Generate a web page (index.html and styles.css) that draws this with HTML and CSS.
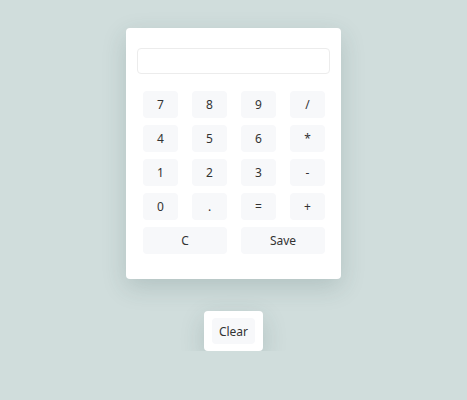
FILE: index.html
```html
<!DOCTYPE html>
<html>
<head>
<meta charset="utf-8">
<link rel="stylesheet" href="styles.css">
</head>
<body>
<div class="page">
  <div class="calc">
    <input class="display" type="text">
    <div class="keys">
      <button class="key">7</button>
      <button class="key">8</button>
      <button class="key">9</button>
      <button class="key">/</button>
      <button class="key">4</button>
      <button class="key">5</button>
      <button class="key">6</button>
      <button class="key">*</button>
      <button class="key">1</button>
      <button class="key">2</button>
      <button class="key">3</button>
      <button class="key">-</button>
      <button class="key">0</button>
      <button class="key">.</button>
      <button class="key">=</button>
      <button class="key">+</button>
      <button class="key wide">C</button>
      <button class="key wide">Save</button>
    </div>
  </div>
  <div class="clear-box">
    <button class="key clear">Clear</button>
  </div>
</div>
</body>
</html>
```
FILE: styles.css
```css
html, body {
  margin: 0;
  padding: 0;
  background: #d0dddc;
  font-family: "Noto Sans", "Open Sans", sans-serif;
}
.page {
  display: flex;
  flex-direction: column;
  align-items: center;
  padding-top: 28px;
}
.calc {
  box-sizing: border-box;
  width: 215px;
  height: 251px;
  background: #fff;
  border-radius: 4px;
  box-shadow: 0 8px 24px rgba(40, 70, 70, 0.18);
  padding: 20px 11px 0 11px;
  display: flex;
  flex-direction: column;
}
.display {
  box-sizing: border-box;
  width: 193px;
  height: 26px;
  border: 1px solid #ececec;
  border-radius: 4px;
  margin: 0;
  padding: 0 6px;
  background: #fff;
  outline: none;
}
.keys {
  margin-top: 17px;
  padding: 0 5px 0 6px;
  display: grid;
  grid-template-columns: repeat(4, 35px);
  grid-auto-rows: 27px;
  column-gap: 14px;
  row-gap: 7px;
}
.key {
  border: none;
  border-radius: 4px;
  background: #f7f8fa;
  color: #333;
  font-family: "Noto Sans", "Open Sans", sans-serif;
  font-size: 12px;
  padding: 0;
  margin: 0;
}
.wide {
  grid-column: span 2;
}
.clear-box {
  margin-top: 32px;
  background: #fff;
  border-radius: 4px;
  padding: 7px 8px;
  box-shadow: 0 8px 24px rgba(40, 70, 70, 0.18);
  display: flex;
}
.clear {
  width: 43px;
  height: 26px;
}
```
